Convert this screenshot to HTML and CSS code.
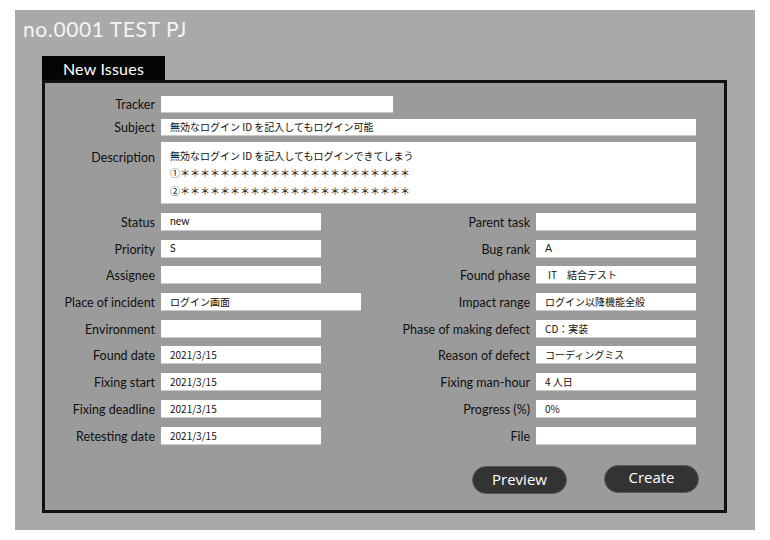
FILE: index.html
```html
<!DOCTYPE html>
<html lang="ja">
<head>
<meta charset="utf-8">
<title>no.0001 TEST PJ</title>
<link rel="stylesheet" href="styles.css">
</head>
<body>
<div class="frame">
  <h1 class="title">no.0001 TEST PJ</h1>
  <div class="tab">New Issues</div>
  <div class="panel">
    <div class="top">
      <label class="lbl">Tracker</label><div class="field f-tracker"></div>
      <label class="lbl">Subject</label><div class="field f-wide">無効なログイン ID を記入してもログイン可能</div>
      <label class="lbl lbl-desc">Description</label>
      <div class="field f-desc">無効なログイン ID を記入してもログインできてしまう<br>①＊＊＊＊＊＊＊＊＊＊＊＊＊＊＊＊＊＊＊＊＊＊＊<br>②＊＊＊＊＊＊＊＊＊＊＊＊＊＊＊＊＊＊＊＊＊＊＊</div>
    </div>
    <div class="grid">
      <label class="lbl">Status</label><div class="field latin">new</div>
      <label class="lbl">Parent task</label><div class="field"></div>

      <label class="lbl">Priority</label><div class="field latin">S</div>
      <label class="lbl">Bug rank</label><div class="field latin">A</div>

      <label class="lbl">Assignee</label><div class="field"></div>
      <label class="lbl">Found phase</label><div class="field f-phase">IT　結合テスト</div>

      <label class="lbl">Place of incident</label><div class="field f-long">ログイン画面</div>
      <label class="lbl">Impact range</label><div class="field">ログイン以降機能全般</div>

      <label class="lbl">Environment</label><div class="field"></div>
      <label class="lbl">Phase of making defect</label><div class="field">CD：実装</div>

      <label class="lbl">Found date</label><div class="field">2021/3/15</div>
      <label class="lbl">Reason of defect</label><div class="field">コーディングミス</div>

      <label class="lbl">Fixing start</label><div class="field">2021/3/15</div>
      <label class="lbl">Fixing man-hour</label><div class="field">4 人日</div>

      <label class="lbl">Fixing deadline</label><div class="field">2021/3/15</div>
      <label class="lbl">Progress (%)</label><div class="field">0%</div>

      <label class="lbl">Retesting date</label><div class="field">2021/3/15</div>
      <label class="lbl">File</label><div class="field"></div>
    </div>
    <div class="actions">
      <button class="btn btn-preview">Preview</button>
      <button class="btn btn-create">Create</button>
    </div>
  </div>
</div>
</body>
</html>
```

FILE: styles.css
```css
* { box-sizing: border-box; }

body {
  margin: 0;
  background: #ffffff;
  font-family: Lato, "Noto Sans", "Noto Sans CJK JP", sans-serif;
}

.frame {
  margin: 10px 0 0 15px;
  width: 740px;
  height: 520px;
  background: #a9a9a9;
  padding: 0 0 0 27px;
  display: flex;
  flex-direction: column;
}

.title {
  margin: 0 0 0 -19px;
  padding-top: 7px;
  height: 46px;
  font-size: 21px;
  font-weight: 400;
  color: #f4f4f4;
  letter-spacing: 0.6px;
  line-height: 24px;
}

.tab {
  width: 123px;
  height: 24px;
  background: #050505;
  color: #ffffff;
  font-size: 16px;
  letter-spacing: 0.2px;
  line-height: 26px;
  text-align: center;
}

.panel {
  width: 685px;
  height: 433px;
  border: 3px solid #111111;
  background: #9b9b9b;
  padding: 13px 28px 0 0;
  display: flex;
  flex-direction: column;
}

.top {
  display: grid;
  grid-template-columns: 110px 1fr;
  column-gap: 6px;
  row-gap: 6px;
}

.lbl {
  text-align: right;
  font-size: 12.5px;
  line-height: 16px;
  color: #111111;
  align-self: end;
  white-space: nowrap;
}

.top .lbl-desc {
  align-self: start;
  padding-top: 8px;
}

.field {
  background: #ffffff;
  height: 18px;
  border-bottom: 1px solid #c9c9c9;
  padding-left: 9px;
  font-family: "Noto Sans CJK JP", sans-serif;
  font-size: 10px;
  line-height: 17px;
  color: #111111;
  white-space: nowrap;
  overflow: hidden;
}

.top .field { height: 17px; line-height: 16px; }

.f-tracker { width: 232px; }
.f-wide { width: 100%; }

.top .f-desc {
  height: 62px;
  padding-top: 5px;
  line-height: 17.3px;
  font-size: 10px;
}

.latin { font-family: Lato, "Noto Sans", sans-serif; font-size: 10.5px; }

.grid {
  margin-top: 9px;
  display: grid;
  grid-template-columns: 110px 200px 163px 160px;
  grid-auto-rows: 18px;
  column-gap: 6px;
  row-gap: 8.7px;
}

.grid .field { width: 160px; }
.grid .f-long { width: 200px; }
.grid .f-phase { padding-left: 12px; }

.actions {
  display: flex;
  justify-content: flex-end;
  align-items: flex-start;
  gap: 37px;
  margin-top: 20px;
  margin-right: -3px;
}

.btn {
  width: 95px;
  height: 28px;
  border-radius: 14px;
  background: #333333;
  border: 1px solid #5a5a5a;
  color: #ffffff;
  font-family: "Open Sans", sans-serif;
  font-size: 15px;
  line-height: 20px;
  padding: 0 0 4px;
}

.btn-preview { margin-top: 1px; padding-bottom: 2px; }
```
